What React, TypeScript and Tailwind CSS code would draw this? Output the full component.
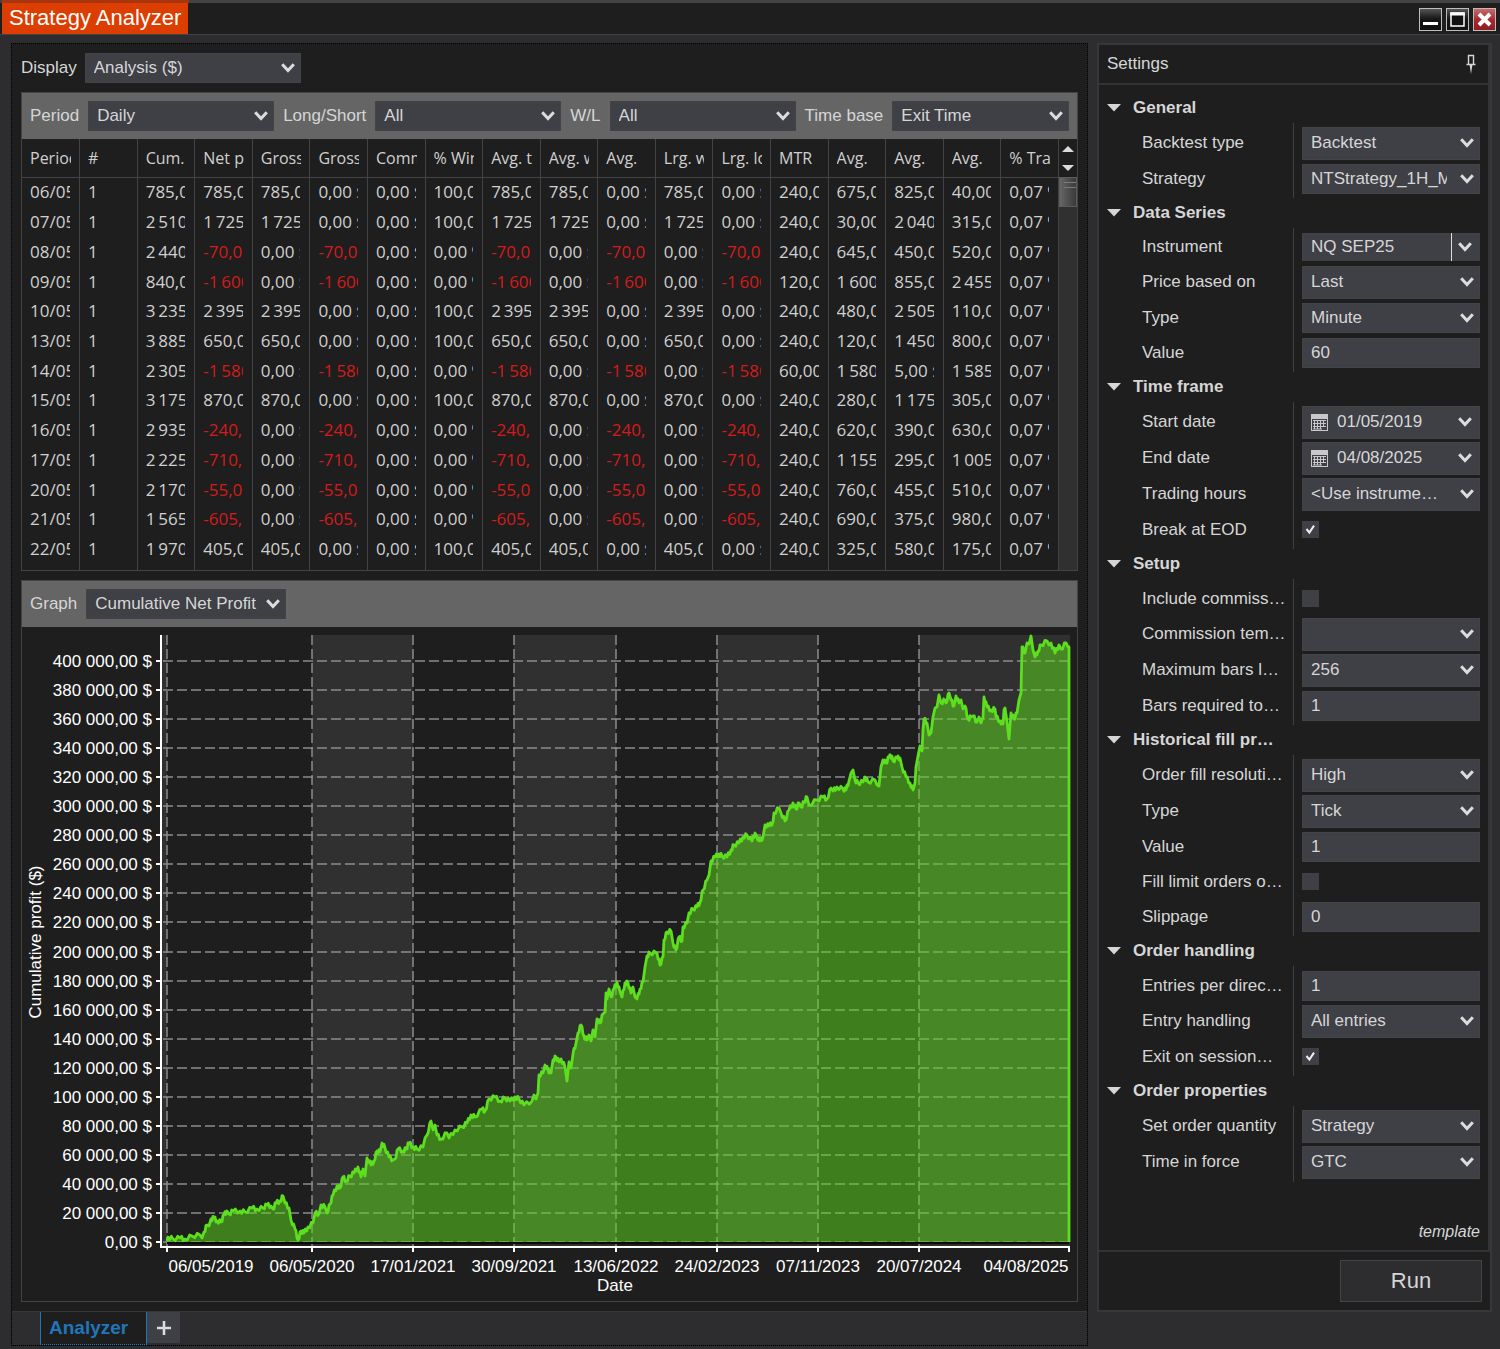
import { useState } from 'react';
import type { ReactNode } from 'react';
import clsx from 'clsx';

const THIN = '\u2009';
const NBSP = '\u00a0';

const formatNumber = (value: number, separator = THIN) => {
  const digits = String(Math.abs(value)).replace(/\B(?=(\d{3})+$)/g, separator);
  return `${value < 0 ? '-' : ''}${digits},00`;
};
const money = (value: number, separator = THIN) => `${formatNumber(value, separator)}${NBSP}$`;

const columns = [
  'Period',
  '#',
  'Cum.',
  'Net profit',
  'Gross profit',
  'Gross loss',
  'Commission',
  '% Win',
  'Avg. trade',
  'Avg. win',
  'Avg.',
  'Lrg. win',
  'Lrg. loss',
  'MTR',
  'Avg.',
  'Avg.',
  'Avg.',
  '% Trade'
];

// date, cumulative, net, minutes, mae, mfe, etd
const days: [string, number, number, number, number, number, number][] = [
  ['06/05/2019', 785, 785, 240, 675, 825, 40],
  ['07/05/2019', 2510, 1725, 240, 30, 2040, 315],
  ['08/05/2019', 2440, -70, 240, 645, 450, 520],
  ['09/05/2019', 840, -1600, 120, 1600, 855, 2455],
  ['10/05/2019', 3235, 2395, 240, 480, 2505, 110],
  ['13/05/2019', 3885, 650, 240, 120, 1450, 800],
  ['14/05/2019', 2305, -1580, 60, 1580, 5, 1585],
  ['15/05/2019', 3175, 870, 240, 280, 1175, 305],
  ['16/05/2019', 2935, -240, 240, 620, 390, 630],
  ['17/05/2019', 2225, -710, 240, 1155, 295, 1005],
  ['20/05/2019', 2170, -55, 240, 760, 455, 510],
  ['21/05/2019', 1565, -605, 240, 690, 375, 980],
  ['22/05/2019', 1970, 405, 240, 325, 580, 175]
];

const toCells = ([date, cum, net, mtr, mae, mfe, etd]: (typeof days)[number]) => {
  const win = money(Math.max(net, 0));
  const loss = money(Math.min(net, 0));
  return [
    date,
    '1',
    money(cum),
    money(net),
    win,
    loss,
    money(0),
    net > 0 ? `100,00${NBSP}%` : `0,00${NBSP}%`,
    money(net),
    win,
    loss,
    win,
    loss,
    formatNumber(mtr),
    money(mae),
    money(mfe),
    money(etd),
    `0,07${NBSP}%`
  ];
};

const xTicks: [number, number, string][] = [
  [167, 211, '06/05/2019'],
  [312, 312, '06/05/2020'],
  [413, 413, '17/01/2021'],
  [514, 514, '30/09/2021'],
  [616, 616, '13/06/2022'],
  [717, 717, '24/02/2023'],
  [818, 818, '07/11/2023'],
  [919, 919, '20/07/2024'],
  [1069, 1026, '04/08/2025']
];
const bands = [
  [161, 6],
  [312, 101],
  [514, 102],
  [717, 101],
  [919, 151]
];
const BASE_Y = 1242;
const yTicks = Array.from({ length: 21 }, (_, i) => ({
  value: i * 20000,
  y: Math.round(BASE_Y - i * 29.05)
}));

const curve =
  '167,1241 168,1237 173,1239 180,1238 185,1239 192,1236 200,1235 202,1238 204,1232 207,1225 209,1226 211,1219 214,1218 217,1221 221,1222 224,1215 227,1211 229,1214 233,1211 240,1211 245,1212 252,1208 257,1209 263,1208 267,1205 271,1206 273,1209 276,1203 280,1201 283,1196 285,1203 289,1208 291,1220 295,1229 298,1240 301,1231 304,1233 308,1227 313,1223 315,1213 319,1214 321,1205 325,1207 327,1213 330,1204 333,1195 337,1186 340,1188 343,1177 346,1181 350,1176 354,1173 358,1167 361,1177 363,1169 365,1176 367,1158 371,1165 374,1161 377,1151 380,1152 382,1143 385,1148 389,1157 393,1160 395,1159 398,1149 403,1151 406,1149 409,1143 413,1147 417,1149 423,1147 425,1138 427,1135 431,1121 433,1130 435,1125 437,1135 441,1139 447,1133 449,1138 455,1130 462,1127 467,1123 471,1115 475,1117 482,1109 485,1111 489,1099 495,1097 500,1101 505,1098 510,1101 515,1097 519,1099 524,1105 532,1101 534,1095 536,1099 538,1093 539,1075 543,1073 545,1065 548,1070 551,1073 553,1060 556,1057 559,1062 561,1059 565,1067 567,1081 569,1062 571,1068 573,1054 576,1043 578,1033 581,1025 584,1036 587,1040 589,1035 591,1041 593,1030 595,1037 597,1019 600,1023 603,1014 605,1012 606,993 607,999 609,989 611,997 614,989 617,982 620,992 622,997 625,983 628,983 631,993 633,987 635,997 637,999 640,989 643,982 645,967 647,956 650,953 656,953 659,959 660,965 663,957 664,940 667,932 671,931 673,943 676,950 679,937 682,941 683,927 687,923 689,913 693,909 697,907 700,902 703,890 707,880 709,875 711,861 715,857 719,854 722,856 727,857 731,850 734,845 739,843 743,837 747,835 752,841 755,833 757,837 760,841 763,837 765,825 769,826 773,822 774,813 779,808 781,813 785,821 789,810 793,803 796,809 799,803 801,807 804,802 807,797 809,805 817,800 823,797 827,799 831,788 833,791 837,787 843,789 846,790 849,781 851,773 853,770 855,780 858,783 863,782 865,777 868,782 875,780 877,785 879,786 881,767 883,760 886,763 889,757 892,756 893,761 897,758 900,758 902,767 906,777 910,783 913,790 915,783 916,767 918,756 920,746 922,751 923,730 924,719 927,723 929,735 931,733 933,717 935,708 937,707 939,695 941,703 945,700 946,703 949,693 951,700 954,706 956,696 959,703 961,700 963,709 965,706 968,719 971,717 973,716 977,722 979,717 981,723 983,717 984,697 987,707 991,710 995,709 996,717 1000,721 1003,724 1004,710 1005,708 1007,722 1009,739 1011,713 1014,719 1017,713 1019,700 1021,693 1022,647 1025,653 1027,643 1029,644 1031,636 1033,650 1035,657 1038,651 1041,645 1047,641 1049,645 1051,643 1055,653 1059,645 1061,649 1066,643 1068,647';

// fill the gaps between samples with a small day to day wobble
const linePoints = curve
  .split(' ')
  .map(pair => pair.split(',').map(Number))
  .flatMap(([x, y], i, all) => {
    const next = all[i + 1];
    if (!next || next[0] - x < 3) return [[x, y]];
    const wobble = i % 3 === 0 ? -2 : 2;
    return [
      [x, y],
      [x + (next[0] - x) / 3, y + (next[1] - y) / 3 + wobble],
      [x + ((next[0] - x) * 2) / 3, y + ((next[1] - y) * 2) / 3 - wobble]
    ];
  });
const linePath = `M${linePoints.map(p => p.join(',')).join(' L')} L1069,647 L1069,${BASE_Y}`;

function Chevron({ className }: { className?: string }) {
  return (
    <svg
      viewBox="0 0 14 10"
      className={clsx('pointer-events-none h-[10px] w-[14px]', className)}
      aria-hidden="true"
    >
      <path d="M1.2 1.2 7 7.6 12.8 1.2" fill="none" stroke="#dcdcdc" strokeWidth="3" />
    </svg>
  );
}

interface SelectProps {
  id?: string;
  value: string;
  className?: string;
  tight?: boolean;
}

function Select({ id, value, className, tight }: SelectProps) {
  return (
    <span className={clsx('relative block', className)}>
      <select
        id={id}
        defaultValue={value}
        className={clsx(
          'block h-full w-full appearance-none overflow-hidden border border-[#434348] bg-[#3f3f46] pl-2 text-[17px] leading-[20px] text-[#d6d6d6] outline-none',
          tight ? 'pr-6' : 'pr-8'
        )}
      >
        <option value={value}>{value}</option>
      </select>
      <Chevron className="absolute top-1/2 right-1.5 -translate-y-1/2" />
    </span>
  );
}

function CalendarIcon() {
  return (
    <svg viewBox="0 0 17 17" className="h-[17px] w-[17px] shrink-0" aria-hidden="true">
      <rect width="17" height="17" fill="#c8c8c8" />
      <rect x="1" y="5" width="15" height="11" fill="#3f3f46" />
      <path
        d="M2 6.5h13M2 9.5h13M2 12.5h13M2 15h9M3.5 6v9M6.5 6v9M9.5 6v9M12.5 6v7"
        stroke="#c8c8c8"
        strokeWidth="1"
        fill="none"
      />
    </svg>
  );
}

type Kind = 'select' | 'compact' | 'split' | 'date' | 'text' | 'check';
type Field = [label: string, kind: Kind, value: string | boolean];

const groups: { title: string; fields: Field[] }[] = [
  {
    title: 'General',
    fields: [
      ['Backtest type', 'select', 'Backtest'],
      ['Strategy', 'compact', 'NTStrategy_1H_MNQ']
    ]
  },
  {
    title: 'Data Series',
    fields: [
      ['Instrument', 'split', 'NQ SEP25'],
      ['Price based on', 'select', 'Last'],
      ['Type', 'compact', 'Minute'],
      ['Value', 'text', '60']
    ]
  },
  {
    title: 'Time frame',
    fields: [
      ['Start date', 'date', '01/05/2019'],
      ['End date', 'date', '04/08/2025'],
      ['Trading hours', 'select', '<Use instrume…'],
      ['Break at EOD', 'check', true]
    ]
  },
  {
    title: 'Setup',
    fields: [
      ['Include commiss…', 'check', false],
      ['Commission tem…', 'select', ''],
      ['Maximum bars l…', 'select', '256'],
      ['Bars required to…', 'text', '1']
    ]
  },
  {
    title: 'Historical fill pr…',
    fields: [
      ['Order fill resoluti…', 'select', 'High'],
      ['Type', 'select', 'Tick'],
      ['Value', 'text', '1'],
      ['Fill limit orders o…', 'check', false],
      ['Slippage', 'text', '0']
    ]
  },
  {
    title: 'Order handling',
    fields: [
      ['Entries per direc…', 'text', '1'],
      ['Entry handling', 'select', 'All entries'],
      ['Exit on session…', 'check', true]
    ]
  },
  {
    title: 'Order properties',
    fields: [
      ['Set order quantity', 'select', 'Strategy'],
      ['Time in force', 'select', 'GTC']
    ]
  }
];

const rowHeight: Record<Kind, string> = {
  select: 'h-[36px]',
  compact: 'h-[35px]',
  split: 'h-[34px]',
  date: 'h-[36px]',
  text: 'h-[35px]',
  check: 'h-[35px]'
};

function Control({ id, kind, value }: { id: string; kind: Kind; value: string | boolean }) {
  const [checked, setChecked] = useState(value === true);
  const text = String(value);

  if (kind === 'check') {
    return (
      <span className="relative block h-[17px] w-[17px]">
        <input
          id={id}
          type="checkbox"
          checked={checked}
          onChange={() => setChecked(v => !v)}
          className="block h-[17px] w-[17px] appearance-none bg-[#3f3f46]"
        />
        {checked && (
          <svg
            viewBox="0 0 17 17"
            className="pointer-events-none absolute inset-0"
            aria-hidden="true"
          >
            <path d="M4.5 8 7.4 11.6 12 4.6" fill="none" stroke="#f0f0f0" strokeWidth="2" />
          </svg>
        )}
      </span>
    );
  }
  if (kind === 'text') {
    return (
      <input
        id={id}
        defaultValue={text}
        className="block h-[30px] w-full border border-[#434348] bg-[#3f3f46] pl-2 text-[17px] text-[#d6d6d6] outline-none"
      />
    );
  }
  if (kind === 'split') {
    return (
      <div className="flex h-[28px] border-l border-[#434348] bg-[#3f3f46]">
        <input
          id={id}
          defaultValue={text}
          className="min-w-0 flex-1 border-r border-[#dcdcdc] bg-transparent pl-2 text-[17px] text-[#d6d6d6] outline-none"
        />
        <button type="button" aria-label="Choose instrument" className="w-[28px] pl-1.5">
          <Chevron />
        </button>
      </div>
    );
  }
  if (kind === 'date') {
    return (
      <div className="flex h-[33px] items-center border border-[#434348] bg-[#3f3f46] pl-2">
        <CalendarIcon />
        <input
          id={id}
          defaultValue={text}
          className="min-w-0 flex-1 bg-transparent pl-[9px] text-[17px] text-[#d6d6d6] outline-none"
        />
        <button type="button" aria-label="Open calendar" className="w-[21px]">
          <Chevron />
        </button>
      </div>
    );
  }
  return (
    <Select id={id} value={text} className={kind === 'compact' ? 'h-[30px]' : 'h-[33px]'} />
  );
}

function Group({ title, fields }: { title: string; fields: Field[] }) {
  const [open, setOpen] = useState(true);
  return (
    <section>
      <button
        type="button"
        aria-expanded={open}
        onClick={() => setOpen(v => !v)}
        className="flex h-[30px] w-full items-center pl-2 text-[17px] font-bold text-[#d6d6d6]"
      >
        <svg viewBox="0 0 14 8" className="mr-3 h-2 w-[14px]" aria-hidden="true">
          <path d="M0 0h14L7 7.5z" fill="#d6d6d6" />
        </svg>
        {title}
      </button>
      {open && (
        <div className="grid grid-cols-[1fr_187px] pr-2">
          <div className="py-[2px] pl-[43px]">
            {fields.map(([label, kind]) => (
              <label
                key={label}
                htmlFor={`${title}-${label}`}
                className={clsx('flex items-center whitespace-nowrap', rowHeight[kind])}
              >
                {label}
              </label>
            ))}
          </div>
          <div className="border-l border-[#3f3f46] py-[2px] pl-2">
            {fields.map(([label, kind, value]) => (
              <div key={label} className={clsx('flex flex-col justify-center', rowHeight[kind])}>
                <Control id={`${title}-${label}`} kind={kind} value={value} />
              </div>
            ))}
          </div>
        </div>
      )}
    </section>
  );
}

function Settings() {
  return (
    <aside className="w-[395px] shrink-0 self-start border-2 border-[#37373a] bg-[#1e1e1e]">
      <div className="border-r-2 border-[#333336]">
        <header className="flex h-[40px] items-center justify-between border-b-2 border-[#333336] pr-3 pl-2">
          <h2>Settings</h2>
          <button type="button" aria-label="Pin settings">
            <svg viewBox="0 0 10 20" className="h-5 w-[10px]" aria-hidden="true">
              <path d="M2.5 1.5h5v9h-5zM0.5 10.5h9" fill="none" stroke="#d6d6d6" strokeWidth="1.4" />
              <path d="M3.6 11h2.8L5 20z" fill="#d6d6d6" />
            </svg>
          </button>
        </header>
        <div className="pt-2">
          {groups.map(group => (
            <Group key={group.title} {...group} />
          ))}
        </div>
        <p className="mt-[40px] pr-2 pb-2 text-right text-[16px] leading-[20px] italic">
          <a href="#template">template</a>
        </p>
      </div>
      <div className="flex justify-end border-t-2 border-[#333336] p-2">
        <button
          type="button"
          className="h-[42px] w-[142px] border border-[#434348] bg-[#2d2d30] text-[22px]"
        >
          Run
        </button>
      </div>
    </aside>
  );
}

function Toolbar({ children }: { children: ReactNode }) {
  return (
    <div className="flex h-[46px] items-center gap-[9px] bg-[#656565] px-2">{children}</div>
  );
}

function ResultsTable() {
  return (
    <div className="flex">
      <div className="min-w-0 flex-1">
        <table className="h-[431px] w-full table-fixed border-collapse font-['Open_Sans',sans-serif] text-[17px] leading-[22px] text-[#d0d0d0]">
          <thead>
            <tr className="h-[38px] border-b border-[#434346] text-[16px]">
              {columns.map((name, i) => (
                <th key={i} className="border-r border-[#434346] px-2 text-left font-normal">
                  <div className="overflow-hidden whitespace-nowrap">{name}</div>
                </th>
              ))}
            </tr>
          </thead>
          <tbody>
            {days.map(day => (
              <tr key={day[0]}>
                {toCells(day).map((cell, i) => (
                  <td
                    key={i}
                    className={clsx(
                      'border-r border-[#434346] pr-[9px] pl-2',
                      cell.startsWith('-') && 'text-[#d61a1a]'
                    )}
                  >
                    <div className="overflow-hidden whitespace-nowrap">{cell}</div>
                  </td>
                ))}
              </tr>
            ))}
            <tr className="h-[6px]" aria-hidden="true">
              {columns.map((_, i) => (
                <td key={i} className="border-r border-[#434346] p-0" />
              ))}
            </tr>
          </tbody>
        </table>
      </div>
      <div className="flex w-[18px] flex-col">
        <button type="button" aria-label="Scroll up" className="flex h-[19px] items-center justify-center">
          <svg viewBox="0 0 12 6" className="h-1.5 w-3" aria-hidden="true">
            <path d="M0 6h12L6 0z" fill="#dcdcdc" />
          </svg>
        </button>
        <button type="button" aria-label="Scroll down" className="flex h-[19px] items-center justify-center">
          <svg viewBox="0 0 12 6" className="h-1.5 w-3" aria-hidden="true">
            <path d="M0 0h12L6 6z" fill="#dcdcdc" />
          </svg>
        </button>
        <div className="flex-1 bg-[#303031]">
          <div className="flex h-[30px] flex-col gap-1 border border-[#5c5c5c] bg-linear-to-r from-[#666] to-[#3a3a3a] pt-1 pl-1">
            <span className="h-px bg-[#7a7a7a]" />
            <span className="h-px bg-[#7a7a7a]" />
          </div>
        </div>
      </div>
    </div>
  );
}

function ProfitChart() {
  return (
    <svg
      viewBox="22 627 1055 674"
      className="block h-auto w-full"
      role="img"
      aria-label="Cumulative net profit"
      fontFamily="'Liberation Sans', Arial, sans-serif"
      fontSize="17"
      fill="#fff"
    >
      {bands.map(([x, width]) => (
        <rect key={x} x={x} y="635" width={width} height="611" fill="#303030" />
      ))}
      <g stroke="#8c8c8c" strokeWidth="1.5" strokeDasharray="10 4">
        {yTicks.map(({ y }) => (
          <line key={y} x1="163" x2="1069" y1={y} y2={y} />
        ))}
        {xTicks.slice(0, -1).map(([x]) => (
          <line key={x} x1={x} x2={x} y1="635" y2="1246" />
        ))}
      </g>
      <path d={`${linePath} L167,${BASE_Y} Z`} fill="#5ede1a" fillOpacity="0.5" />
      <path d={`M167 ${BASE_Y + 1}H1069`} stroke="#0a0a0a" strokeWidth="2" />
      <path d={linePath} fill="none" stroke="#5ddf1f" strokeWidth="2.8" strokeLinejoin="round" />
      <path d="M161 635V1247H1070" fill="none" stroke="#fff" strokeWidth="2" />
      <g stroke="#fff" strokeWidth="2">
        {yTicks.map(({ y }) => (
          <line key={y} x1="156" x2="161" y1={y} y2={y} />
        ))}
        {xTicks.map(([x]) => (
          <line key={x} x1={x} x2={x} y1="1247" y2="1252" />
        ))}
      </g>
      {yTicks.map(({ value, y }) => (
        <text key={value} x="152" y={y + 6} textAnchor="end">
          {money(value, NBSP)}
        </text>
      ))}
      {xTicks.map(([x, center, date]) => (
        <text key={x} x={center} y="1272" textAnchor="middle">
          {date}
        </text>
      ))}
      <text x="615" y="1291" textAnchor="middle">
        Date
      </text>
      <text transform="translate(41 942) rotate(-90)" textAnchor="middle">
        Cumulative profit ($)
      </text>
    </svg>
  );
}

const windowBtn =
  'flex h-[23px] w-[23px] items-center justify-center border border-[#bdbdbd] bg-linear-to-b';

function TitleBar() {
  return (
    <>
      <div className="h-[3px] bg-[#434346] pl-[2px]">
        <div className="h-full w-[187px] bg-[#a83410]" />
      </div>
      <header className="flex h-[32px] items-start justify-between border-b border-[#434346] bg-[#1e1e1e] pr-1 pl-[2px]">
        <h1 className="h-[31px] bg-[#dc3d00] px-[7px] text-[22px] leading-[29px] text-white">
          Strategy Analyzer
        </h1>
        <div className="flex gap-1 pt-[5px]">
          <button type="button" aria-label="Minimize" className={clsx(windowBtn, 'from-[#555] via-[#151515] to-[#111]')}>
            <svg viewBox="0 0 21 21" aria-hidden="true">
              <path d="M3 14.5h15" stroke="#fff" strokeWidth="3" />
            </svg>
          </button>
          <button type="button" aria-label="Maximize" className={clsx(windowBtn, 'from-[#555] via-[#151515] to-[#111]')}>
            <svg viewBox="0 0 21 21" aria-hidden="true">
              <path d="M4 4h13v13H4z" fill="#111" stroke="#fff" strokeWidth="1.5" />
              <path d="M3.2 5h14.6" stroke="#fff" strokeWidth="3" />
            </svg>
          </button>
          <button type="button" aria-label="Close" className={clsx(windowBtn, 'from-[#c9686c] via-[#a82a30] to-[#8f1c22]')}>
            <svg viewBox="0 0 21 21" aria-hidden="true">
              <path d="M5 5 16 16M16 5 5 16" stroke="#fff" strokeWidth="4" />
            </svg>
          </button>
        </div>
      </header>
    </>
  );
}

export default function App() {
  return (
    <div className="min-h-screen bg-[#2d2d30] font-['Liberation_Sans',Arial,sans-serif] text-[17px] leading-[20px] text-[#d6d6d6]">
      <TitleBar />
      <div className="flex gap-[9px] pt-2 pr-2 pl-[11px]">
        <main className="min-w-0 flex-1 border border-dotted border-black bg-[#1e1e1e]">
          <div className="flex flex-col gap-[9px] p-[9px]">
            <div className="flex items-center gap-2">
              <label htmlFor="display">Display</label>
              <Select id="display" value="Analysis ($)" className="h-[30px] w-[216px]" />
            </div>

            <section className="border border-[#434346]">
              <Toolbar>
                <label htmlFor="period">Period</label>
                <Select id="period" value="Daily" className="h-[30px] w-[186px]" />
                <label htmlFor="long-short">Long/Short</label>
                <Select id="long-short" value="All" className="h-[30px] w-[186px]" />
                <label htmlFor="wl">W/L</label>
                <Select id="wl" value="All" className="h-[30px] w-[186px]" />
                <label htmlFor="time-base" className="whitespace-nowrap">
                  Time base
                </label>
                <Select id="time-base" value="Exit Time" className="h-[30px] min-w-0 flex-1" />
              </Toolbar>
              <ResultsTable />
            </section>

            <section className="border border-[#434346]">
              <Toolbar>
                <label htmlFor="graph">Graph</label>
                <Select id="graph" value="Cumulative Net Profit" tight className="h-[30px] w-[200px]" />
              </Toolbar>
              <ProfitChart />
            </section>
          </div>

          <nav className="flex h-[34px] border-t border-[#37373a] bg-[#2d2d30] pl-7">
            <a
              href="#analyzer"
              className="flex w-[107px] items-center border-x border-b border-[#1c78bd] bg-[#1e1e1e] pl-2 text-[19px] font-bold text-[#1f77bb] [border-bottom-style:dotted]"
            >
              Analyzer
            </a>
            <button
              type="button"
              aria-label="Add tab"
              className="flex h-[31px] w-[33px] items-center justify-center bg-[#3f3f46]"
            >
              <svg viewBox="0 0 16 16" className="h-4 w-4" aria-hidden="true">
                <path d="M8 1v14M1 8h14" stroke="#dcdcdc" strokeWidth="2.6" />
              </svg>
            </button>
          </nav>
        </main>
        <Settings />
      </div>
    </div>
  );
}
